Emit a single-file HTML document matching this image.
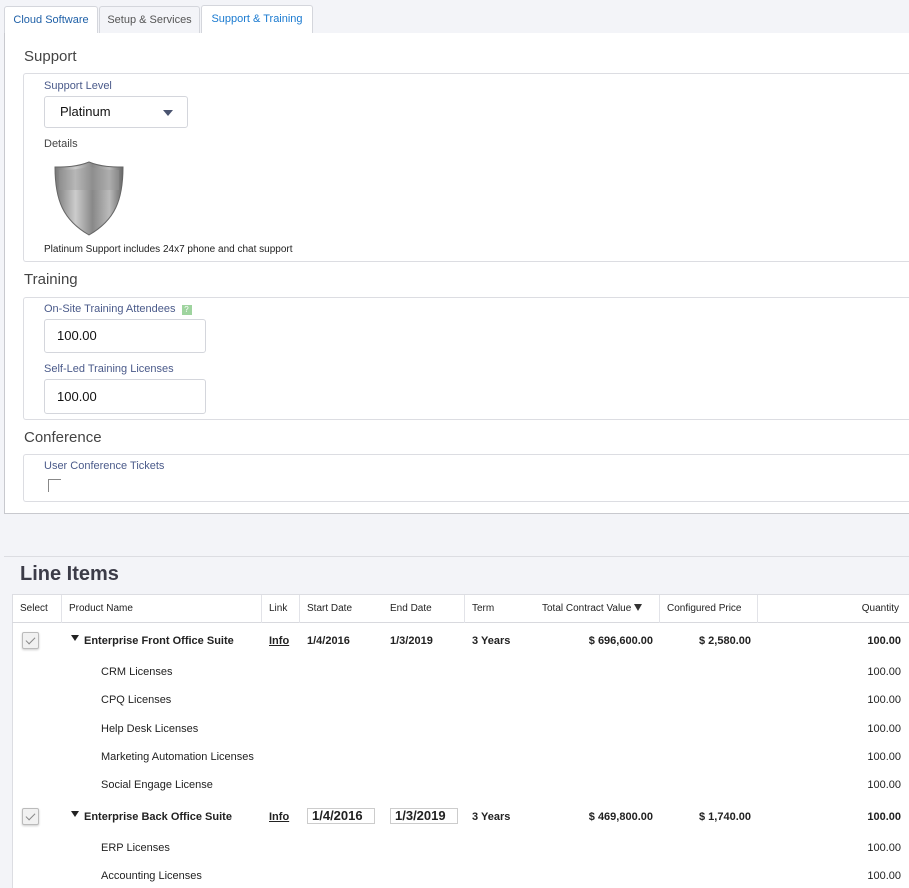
<!DOCTYPE html>
<html><head><style>
*{box-sizing:border-box;margin:0;padding:0}
body{width:909px;height:888px;overflow:hidden;background:#f3f4f8;font-family:"Liberation Sans",Arial,sans-serif;position:relative;color:#222}
.a{position:absolute}
.tab{position:absolute;top:6px;height:28px;border:1px solid #d4d6dc;border-bottom:none;background:#f3f4f8;font-size:11px;color:#555;text-align:center;line-height:27px;border-radius:3px 3px 0 0}
.h{position:absolute;font-size:15px;color:#444}
.box{position:absolute;left:23px;right:0;border:1px solid #dcdde2;border-right:none;border-radius:3px 0 0 3px;background:#fff}
.lbl{position:absolute;font-size:11px;color:#4a5a8a}
.inp{position:absolute;border:1px solid #d4d6dc;border-radius:3px;background:#fff;font-size:13px;color:#111;padding-left:12px}
.th{position:absolute;top:603px;font-size:10px;color:#222}
.vl{position:absolute;top:595px;height:28px;width:1px;background:#e2e3e8}
.r{position:absolute;font-size:11px;color:#222}
.b{font-weight:bold}
.cb{position:absolute;left:22px;width:17px;height:17px;border:1px solid #bbb;border-radius:2px;background:#f1f1f1;box-shadow:0 1px 2px #ccc}
.cb:after{content:"";position:absolute;left:5px;top:2px;width:4px;height:8px;border:solid #888;border-width:0 1.5px 1.5px 0;transform:rotate(45deg)}
.q{position:absolute;right:8px;font-size:11px}
.tri{display:inline-block;width:0;height:0;border-left:4px solid transparent;border-right:4px solid transparent;border-top:6px solid #222;margin-right:5px;vertical-align:3px}
.dt{position:absolute;border:1px solid #ccc;font-size:13px;font-weight:bold;padding-left:4px;height:16px;line-height:14px;background:#fff}
</style></head><body>
<div class="tab" style="left:4px;width:94px;color:#2061a8;background:#fff">Cloud Software</div>
<div class="tab" style="left:99px;width:101px">Setup &amp; Services</div>
<div class="tab" style="left:201px;width:112px;top:5px;height:29px;background:#fff;color:#1a7ad0">Support &amp; Training</div>
<div class="a" style="left:4px;top:33px;width:905px;height:481px;background:#fff;border-left:1px solid #c8c9ce;border-bottom:1px solid #c8c9ce"></div>
<div class="h" style="left:24px;top:48px">Support</div>
<div class="box" style="top:73px;height:189px"></div>
<div class="lbl" style="left:44px;top:80px">Support Level</div>
<div class="inp" style="left:44px;top:96px;width:144px;height:32px;line-height:30px;padding-left:15px">Platinum<span class="a" style="left:118px;top:13px;border-left:5px solid transparent;border-right:5px solid transparent;border-top:6px solid #4a5470"></span></div>
<div class="lbl" style="left:44px;top:138px;color:#444">Details</div>
<svg class="a" style="left:53px;top:160px" width="72" height="76" viewBox="0 0 72 76"><defs><linearGradient id="g" x1="0" x2="1"><stop offset="0" stop-color="#777"/><stop offset=".3" stop-color="#ccc"/><stop offset=".55" stop-color="#888"/><stop offset=".8" stop-color="#bbb"/><stop offset="1" stop-color="#666"/></linearGradient></defs><path d="M36 2 C24 7 12 7 2 7 C2 40 10 60 36 75 C62 60 70 40 70 7 C60 7 48 7 36 2Z" fill="url(#g)" stroke="#666"/><path d="M36 6 C26 10 14 10 6 10 L6 30 L66 30 L66 10 C58 10 46 10 36 6Z" fill="#999" opacity=".4"/></svg>
<div class="r" style="left:44px;top:244px;font-size:10px">Platinum Support includes 24x7 phone and chat support</div>
<div class="h" style="left:24px;top:271px">Training</div>
<div class="box" style="top:297px;height:123px"></div>
<div class="lbl" style="left:44px;top:303px">On-Site Training Attendees <span style="display:inline-block;width:10px;height:10px;background:#9fd49f;color:#fff;font-size:8px;text-align:center;line-height:10px;margin-left:3px">?</span></div>
<div class="inp" style="left:44px;top:319px;width:162px;height:34px;line-height:32px">100.00</div>
<div class="lbl" style="left:44px;top:363px">Self-Led Training Licenses</div>
<div class="inp" style="left:44px;top:379px;width:162px;height:35px;line-height:33px">100.00</div>
<div class="h" style="left:24px;top:429px">Conference</div>
<div class="box" style="top:454px;height:48px"></div>
<div class="lbl" style="left:44px;top:460px">User Conference Tickets</div>
<div class="a" style="left:48px;top:479px;width:13px;height:13px;border-left:1px solid #888;border-top:1px solid #888"></div>
<div class="a" style="left:4px;top:556px;width:905px;height:1px;background:#dcdde2"></div>
<div class="a" style="left:20px;top:563px;font-size:20px;font-weight:bold;color:#3c3c48">Line Items</div>
<div class="a" style="left:12px;top:594px;width:897px;height:294px;background:#fff;border-left:1px solid #dcdde2;border-top:1px solid #dcdde2"></div>
<div class="a" style="left:12px;top:622px;width:897px;height:1px;background:#d8d9de"></div>
<div class="vl" style="left:61px"></div><div class="vl" style="left:261px"></div><div class="vl" style="left:299px"></div><div class="vl" style="left:464px"></div><div class="vl" style="left:659px"></div><div class="vl" style="left:757px"></div>
<div class="th" style="left:20px">Select</div><div class="th" style="left:69px">Product Name</div><div class="th" style="left:269px">Link</div><div class="th" style="left:307px">Start Date</div><div class="th" style="left:390px">End Date</div><div class="th" style="left:472px">Term</div><div class="th" style="left:542px">Total Contract Value <span style="display:inline-block;border-left:4px solid transparent;border-right:4px solid transparent;border-top:7px solid #333"></span></div><div class="th" style="left:667px">Configured Price</div><div class="th" style="right:10px">Quantity</div>
<div class="cb" style="top:632px"></div>
<div class="r b" style="left:71px;top:635px"><span class="tri"></span>Enterprise Front Office Suite</div>
<div class="r b" style="left:269px;top:635px;text-decoration:underline">Info</div>
<div class="r b" style="left:307px;top:635px">1/4/2016</div>
<div class="r b" style="left:390px;top:635px">1/3/2019</div>
<div class="r b" style="left:472px;top:635px">3 Years</div>
<div class="r b" style="right:256px;top:635px">$ 696,600.00</div>
<div class="r b" style="right:158px;top:635px">$ 2,580.00</div>
<div class="q b" style="top:635px">100.00</div>
<div class="r" style="left:101px;top:666px">CRM Licenses</div><div class="q" style="top:666px">100.00</div>
<div class="r" style="left:101px;top:694px">CPQ Licenses</div><div class="q" style="top:694px">100.00</div>
<div class="r" style="left:101px;top:723px">Help Desk Licenses</div><div class="q" style="top:723px">100.00</div>
<div class="r" style="left:101px;top:751px">Marketing Automation Licenses</div><div class="q" style="top:751px">100.00</div>
<div class="r" style="left:101px;top:779px">Social Engage License</div><div class="q" style="top:779px">100.00</div>
<div class="cb" style="top:808px"></div>
<div class="r b" style="left:71px;top:811px"><span class="tri"></span>Enterprise Back Office Suite</div>
<div class="r b" style="left:269px;top:811px;text-decoration:underline">Info</div>
<div class="dt" style="left:307px;top:808px;width:68px">1/4/2016</div>
<div class="dt" style="left:390px;top:808px;width:68px">1/3/2019</div>
<div class="r b" style="left:472px;top:811px">3 Years</div>
<div class="r b" style="right:256px;top:811px">$ 469,800.00</div>
<div class="r b" style="right:158px;top:811px">$ 1,740.00</div>
<div class="q b" style="top:811px">100.00</div>
<div class="r" style="left:101px;top:842px">ERP Licenses</div><div class="q" style="top:842px">100.00</div>
<div class="r" style="left:101px;top:870px">Accounting Licenses</div><div class="q" style="top:870px">100.00</div>
</body></html>
